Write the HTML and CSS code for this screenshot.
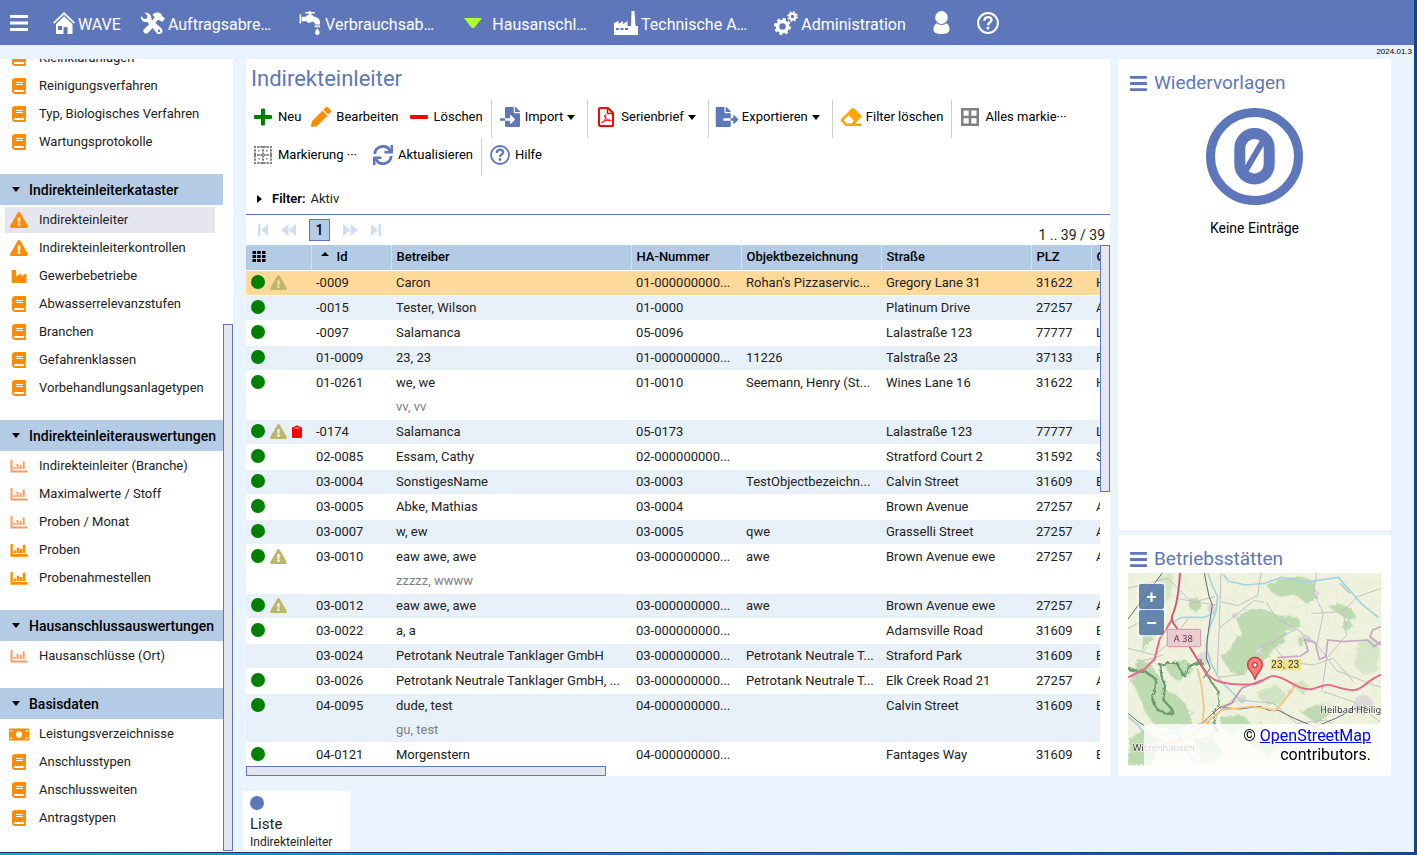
FILE: index.html
```html
<!DOCTYPE html>
<html lang="de">
<head>
<meta charset="utf-8">
<meta name="viewport" content="width=device-width, initial-scale=1">
<title>WAVE – Indirekteinleiter</title>
<link rel="stylesheet" href="styles.css">
</head>
<body>
<svg class="sprite" aria-hidden="true">
  <symbol id="i-book" viewBox="0 0 448 512"><path d="M448 360V24c0-13.300-10.700-24-24-24H96C43 0 0 43 0 96v320c0 53 43 96 96 96h328c13.300 0 24-10.700 24-24v-16c0-7.500-3.500-14.300-8.900-18.700-4.200-15.400-4.200-59.300 0-74.700 5.400-4.300 8.900-11.100 8.900-18.600zM128 134c0-3.300 2.700-6 6-6h212c3.300 0 6 2.700 6 6v20c0 3.300-2.700 6-6 6H134c-3.300 0-6-2.700-6-6v-20zm0 64c0-3.300 2.700-6 6-6h212c3.300 0 6 2.700 6 6v20c0 3.300-2.700 6-6 6H134c-3.300 0-6-2.700-6-6v-20zm253.400 250H96c-17.700 0-32-14.300-32-32 0-17.600 14.400-32 32-32h285.400c-1.900 17.100-1.900 46.900 0 64z"/></symbol>
  <symbol id="i-warn" viewBox="0 0 576 512"><path d="M569.500 440C588 472 564.800 512 527.900 512H48c-36.900 0-60-40-41.500-72L246.400 24c18.500-32 64.700-32 83.200 0l239.900 416zM288 354c-25.400 0-46 20.600-46 46s20.600 46 46 46 46-20.600 46-46-20.600-46-46-46zm-43.700-165.300l7.400 136c.4 6.300 5.700 11.300 12 11.300h48.600c6.300 0 11.600-5 12-11.300l7.400-136c.3-6.900-5.100-12.700-12-12.700h-63.400c-6.900 0-12.300 5.800-12 12.700z"/></symbol>
  <symbol id="i-factory" viewBox="0 32 512 448"><path d="M475 163.800L336 252.300V184c0-18.900-20.900-30.400-36.900-20.200L160 252.300V56c0-13.300-10.700-24-24-24H24C10.700 32 0 42.700 0 56v400c0 13.300 10.700 24 24 24h464c13.300 0 24-10.700 24-24V184c0-18.900-20.900-30.400-37-20.200z"/></symbol>
  <symbol id="i-chart" viewBox="0 0 17 13"><path d="M0 0h2v10.500h15v2H0zM3 7h2v2H3zM6 4h2v5H6zM9 5h2v4H9zM12.200 1.500h2V9h-2z"/></symbol>
  <symbol id="i-chart-bold" viewBox="0 0 17 13"><path d="M0 0h2.300v10H17v2.700H0zM3.200 6.500h2.500V9H3.200zM6.200 3.800h2.500V9H6.200zM9.200 5h2.500v4H9.200zM12.200.8h2.700V9h-2.700z"/></symbol>
  <symbol id="i-money" viewBox="0 0 20 12"><path fill-rule="evenodd" d="M1 0h18a1 1 0 0 1 1 1v10a1 1 0 0 1-1 1H1a1 1 0 0 1-1-1V1a1 1 0 0 1 1-1zM10 2.800a3 3.200 0 1 0 0 6.400 3 3.200 0 0 0 0-6.400zM1.500 1.500v2a2 2 0 0 0 2-2zM16.500 1.500a2 2 0 0 0 2 2v-2zM1.500 8.500v2h2a2 2 0 0 0-2-2zM18.500 8.500a2 2 0 0 0-2 2h2z"/></symbol>
  <symbol id="i-pencil" viewBox="0 0 512 512"><path d="M498 142l-46 46c-5 5-12 5-17 0L324 77c-5-5-5-12 0-17l46-46c19-19 49-19 68 0l60 60c19 19 19 49 0 68zM284 100L22 362 0 484c-3 16 11 31 28 28l122-22 262-262c5-5 5-12 0-17L301 100c-5-5-12-5-17 0z"/></symbol>
  <symbol id="i-import" viewBox="0 0 512 512"><path d="M16 288c-8.800 0-16 7.200-16 16v32c0 8.800 7.200 16 16 16h112v-64zm489-183L407 7c-4.500-4.500-10.600-7-17-7h-6v128h128v-6c0-6.300-2.500-12.400-7-17zm-153 31V0H152c-13.300 0-24 10.700-24 24v264h128v-65c0-14.300 17.300-21.400 27.400-11.300L379 308c6.600 6.700 6.600 17.400 0 24l-95.700 96.400c-10.100 10.100-27.400 3-27.400-11.300V352H128v136c0 13.300 10.700 24 24 24h336c13.300 0 24-10.700 24-24V160H376c-13.200 0-24-10.800-24-24z"/></symbol>
  <symbol id="i-export" viewBox="0 0 576 512"><path d="M384 122c0-6.300-2.500-12.400-7-17L279 7c-4.500-4.500-10.600-7-17-7h-6v128h128zM571 308l-95.700-96.400c-10.100-10.100-27.400-3-27.400 11.300V288h-64v64h64v65c0 14.300 17.300 21.400 27.400 11.300L571 332c6.600-6.600 6.600-17.400 0-24zm-379 28v-32c0-8.800 7.200-16 16-16h176V160H248c-13.200 0-24-10.800-24-24V0H24C10.700 0 0 10.700 0 24v464c0 13.300 10.700 24 24 24h336c13.300 0 24-10.700 24-24V352H208c-8.800 0-16-7.200-16-16z"/></symbol>
  <symbol id="i-eraser" viewBox="0 32 512 448"><path d="M498 274c18.700-18.700 18.700-49.100 0-68L338 46c-18.700-18.700-49.100-18.700-68 0L14 302c-18.700 18.700-18.700 49.100 0 68l96 96a48 48 0 0 0 34 14h356c6.600 0 12-5.400 12-12v-40c0-6.600-5.400-12-12-12H356l142-142zm-302.700-62.700l137.400 137.400L265.400 416H150.600l-80-80 124.700-124.700z"/></symbol>
  <symbol id="i-plus" viewBox="0 0 18 18"><path d="M7 1.500a1 1 0 0 1 1-1h2a1 1 0 0 1 1 1V7h6a1 1 0 0 1 1 1v2a1 1 0 0 1-1 1h-6v5.500a1 1 0 0 1-1 1H8a1 1 0 0 1-1-1V11H1a1 1 0 0 1-1-1V8a1 1 0 0 1 1-1h6z"/></symbol>
  <symbol id="i-minus" viewBox="0 0 18 18"><rect y="7" width="18" height="4" rx="1"/></symbol>
  <symbol id="i-pdf" viewBox="0 0 16 20"><path fill="none" stroke="currentColor" stroke-width="2" stroke-linejoin="round" d="M1 2a1 1 0 0 1 1-1h8l5 5v12a1 1 0 0 1-1 1H2a1 1 0 0 1-1-1z"/><path fill="none" stroke="currentColor" stroke-width="1.500" d="M9.500 1v5.500H15"/><path fill="none" stroke="currentColor" d="M3.500 15.800c1.600.6 4.300-4 4.300-7.300 0-1.400-1.200-1.200-1 .3.300 2.200 2.300 4.700 4.700 5.200 1.500.3 1.300-1.200 0-1.200-2.600 0-6.500 1.300-8 3z"/></symbol>
  <symbol id="i-grid" viewBox="0 0 18 18"><path fill-rule="evenodd" d="M0 0h18v18H0zM2.500 2.500v5.200h5.200V2.500zM10.300 2.500v5.200h5.200V2.500zM2.500 10.300v5.200h5.200v-5.200zM10.300 10.300v5.200h5.200v-5.200z"/></symbol>
  <symbol id="i-dotgrid" viewBox="0 0 18 18"><path fill="none" stroke="currentColor" stroke-width="2" stroke-dasharray="2 1.200" d="M0 1h18M0 9h18M0 17h18M1 0v18M9 0v18M17 0v18"/><path fill="none" stroke="currentColor" stroke-width="1.200" stroke-dasharray="1.500 2.500" d="M0 5h18M0 13h18M5 0v18M13 0v18"/></symbol>
  <symbol id="i-refresh" viewBox="0 0 20 20"><path fill="none" stroke="currentColor" stroke-width="2.800" d="M1.800 9A8.100 8.100 0 0 1 17 5.600M18.200 11A8.100 8.100 0 0 1 3 14.400"/><path d="M17.500 0H20v8.500h-8.500V6H15l2.500-1zM2.500 20H0v-8.500h8.500V14H5l-2.500 1z"/></symbol>
  <symbol id="i-help" viewBox="0 0 20 20"><circle cx="10" cy="10" r="9" fill="none" stroke="currentColor" stroke-width="1.800"/><path fill="none" stroke="currentColor" stroke-width="2.200" d="M6.800 8c0-4.300 6.400-4.300 6.400-.8 0 2.300-3.200 2.200-3.200 4.800"/><circle cx="10" cy="14.500" r="1.400"/></symbol>
  <symbol id="i-menu" viewBox="0 0 18 16"><path d="M0 0h18v3H0zM0 6.500h18v3H0zM0 13h18v3H0z"/></symbol>
  <symbol id="i-home" viewBox="0 0 22 22"><path d="M11 0l11 10.500-1.300 1.300L11 2.600 1.300 11.800 0 10.500z"/><path fill-rule="evenodd" d="M11 4.200l8.500 8V22h-5v-7h-4v7H3v-9.800zM5 14v4h4v-4z"/></symbol>
  <symbol id="i-tools" viewBox="0 0 24 22"><path d="M3.500.5l3 3L6 6.500l-3 .6-3-3C-.6 8 2.500 10.800 6.300 10l8.900 10.500c1.400 1.800 3.700 2 5.200.8s1.500-3.500 0-5L10.500 7.500C11 3.500 7.500-.3 3.500.5zM18 17.500a1.200 1.200 0 1 1 0 2.400 1.200 1.200 0 0 1 0-2.400z"/><path d="M11.500 2.800C14-.5 18 0 20.500 2l.5 2 3 2.500-3 3.500-2.200-1.700-2-.3-2.600 3-3-2.800 2.700-2.700zM9 11.500l3.700 3.300-5.700 6.200c-2.600 1.800-5.700-.8-4.300-3.500z"/></symbol>
  <symbol id="i-tap" viewBox="0 0 20 23"><path d="M0 3h1.500v9H0zM2 5.500h4c.8-1 1.600-1.500 2.700-1.700V2.500H5.500V1H9V0h2v1h3.500v1.500h-3.200v1.300c1.500.2 2.500 1 3.200 2C17.500 6 19.700 8 19.500 11v2h-5c.2-2-.7-2.700-2.500-2.700-1.700 1.500-4 1.200-5.500-.5H2zM14.500 14h5v1.500h-5zM17 16.500c1.300 1.800 2.300 3 2.300 4.200 0 3-4.600 3-4.600 0 0-1.200 1-2.400 2.300-4.200z"/></symbol>
  <symbol id="i-plant" viewBox="0 0 24 24"><path fill-rule="evenodd" d="M17.500 0h3l1 15H24v9H0V12l4.500-2v3L9 10v3l4.500-3v5H17zM2 17v2h3v-2zM6.500 17v2h3v-2zM11 17v2h3v-2z"/></symbol>
  <symbol id="i-gears" viewBox="0 0 24 24"><g fill="none" stroke="currentColor"><circle cx="8.500" cy="15.500" r="5" stroke-width="3.600"/><circle cx="8.500" cy="15.500" r="7.200" stroke-width="2.600" stroke-dasharray="3.050 2.600"/><circle cx="18.500" cy="5.500" r="2.800" stroke-width="2.200"/><circle cx="18.500" cy="5.500" r="4.400" stroke-width="1.900" stroke-dasharray="1.850 1.600"/></g></symbol>
  <symbol id="i-user" viewBox="0 0 16 23"><ellipse cx="8" cy="6.500" rx="6.300" ry="6.500"/><path d="M3 12.300c3 2.200 7 2.200 10 0 2 1.200 3 3.700 3 6.200 0 3-3 4.500-8 4.500s-8-1.500-8-4.500c0-2.500 1-5 3-6.200z"/></symbol>
  <symbol id="i-clip" viewBox="0 0 10 13"><path d="M1 2h1.500V1h1.300a1.300 1.300 0 0 1 2.400 0h1.300v1H9a1 1 0 0 1 1 1v9a1 1 0 0 1-1 1H1a1 1 0 0 1-1-1V3a1 1 0 0 1 1-1z"/><path stroke="#fff" stroke-width=".8" fill="none" d="M2.500 3h5"/></symbol>
  <symbol id="i-cells" viewBox="0 0 13 11"><path d="M0 0h3.500v3H0zM4.700 0h3.500v3H4.700zM9.500 0H13v3H9.500zM0 4h3.500v3H0zM4.700 4h3.500v3H4.700zM9.500 4H13v3H9.500zM0 8h3.500v3H0zM4.700 8h3.500v3H4.700zM9.500 8H13v3H9.500z"/></symbol>
  <symbol id="i-first" viewBox="0 0 10 12"><path d="M0 0h2.500v12H0zM10 0v12L3 6z"/></symbol>
  <symbol id="i-prev" viewBox="0 0 15 12"><path d="M7.500 0v12L0 6zM15 0v12L7.500 6z"/></symbol>
</svg>

<div class="app">
  <header class="topbar">
    <button class="nav-btn burger" aria-label="Menü"><svg class="ic-menu"><use href="#i-menu"/></svg></button>
    <nav class="nav">
      <button class="nav-btn"><svg class="ic22"><use href="#i-home"/></svg><span>WAVE</span></button>
      <button class="nav-btn"><svg class="ic24"><use href="#i-tools"/></svg><span>Auftragsabre…</span></button>
      <button class="nav-btn"><svg class="ic24"><use href="#i-tap"/></svg><span>Verbrauchsab…</span></button>
      <button class="nav-btn current"><svg class="ic-tri" viewBox="0 0 18 10"><path d="M0 0h18L11 9q-2 2-4 0z"/></svg><span>Hausanschl…</span></button>
      <button class="nav-btn"><svg class="ic24"><use href="#i-plant"/></svg><span>Technische A…</span></button>
      <button class="nav-btn"><svg class="ic24"><use href="#i-gears"/></svg><span>Administration</span></button>
      <button class="nav-btn user" aria-label="Benutzer"><svg class="ic-user"><use href="#i-user"/></svg></button>
      <button class="nav-btn" aria-label="Hilfe"><svg class="ic22"><use href="#i-help"/></svg></button>
    </nav>
  </header>
  <div class="version">2024.01.3</div>

  <div class="workspace">
    <aside class="sidebar">
      <div class="menu">
        <ul class="menu-list">
          <li><a href="#"><svg><use href="#i-book"/></svg>Kleinkläranlagen</a></li>
          <li><a href="#"><svg><use href="#i-book"/></svg>Reinigungsverfahren</a></li>
          <li><a href="#"><svg><use href="#i-book"/></svg>Typ, Biologisches Verfahren</a></li>
          <li><a href="#"><svg><use href="#i-book"/></svg>Wartungsprotokolle</a></li>
        </ul>
        <button class="menu-head"><i class="caret"></i>Indirekteinleiterkataster</button>
        <ul class="menu-list">
          <li><a href="#" class="selected"><svg><use href="#i-warn"/></svg>Indirekteinleiter</a></li>
          <li><a href="#"><svg><use href="#i-warn"/></svg>Indirekteinleiterkontrollen</a></li>
          <li><a href="#"><svg class="low"><use href="#i-factory"/></svg>Gewerbebetriebe</a></li>
          <li><a href="#"><svg><use href="#i-book"/></svg>Abwasserrelevanzstufen</a></li>
          <li><a href="#"><svg><use href="#i-book"/></svg>Branchen</a></li>
          <li><a href="#"><svg><use href="#i-book"/></svg>Gefahrenklassen</a></li>
          <li><a href="#"><svg><use href="#i-book"/></svg>Vorbehandlungsanlagetypen</a></li>
        </ul>
        <button class="menu-head"><i class="caret"></i>Indirekteinleiterauswertungen</button>
        <ul class="menu-list">
          <li><a href="#"><svg class="low pale"><use href="#i-chart"/></svg>Indirekteinleiter (Branche)</a></li>
          <li><a href="#"><svg class="low pale"><use href="#i-chart"/></svg>Maximalwerte / Stoff</a></li>
          <li><a href="#"><svg class="low pale"><use href="#i-chart"/></svg>Proben / Monat</a></li>
          <li><a href="#"><svg class="low"><use href="#i-chart-bold"/></svg>Proben</a></li>
          <li><a href="#"><svg class="low"><use href="#i-chart-bold"/></svg>Probenahmestellen</a></li>
        </ul>
        <button class="menu-head"><i class="caret"></i>Hausanschlussauswertungen</button>
        <ul class="menu-list">
          <li><a href="#"><svg class="low pale"><use href="#i-chart"/></svg>Hausanschlüsse (Ort)</a></li>
        </ul>
        <button class="menu-head"><i class="caret"></i>Basisdaten</button>
        <ul class="menu-list">
          <li><a href="#"><svg class="low"><use href="#i-money"/></svg>Leistungsverzeichnisse</a></li>
          <li><a href="#"><svg><use href="#i-book"/></svg>Anschlusstypen</a></li>
          <li><a href="#"><svg><use href="#i-book"/></svg>Anschlussweiten</a></li>
          <li><a href="#"><svg><use href="#i-book"/></svg>Antragstypen</a></li>
        </ul>
      </div>
      <div class="track track-menu"><div class="thumb"></div></div>
    </aside>

    <div class="content">
      <div class="columns">
        <main class="panel list-panel">
          <h1>Indirekteinleiter</h1>
          <div class="toolbar">
            <button><svg class="green"><use href="#i-plus"/></svg><span>Neu</span></button>
            <button><svg class="dark-orange big"><use href="#i-pencil"/></svg><span>Bearbeiten</span></button>
            <button><svg class="red"><use href="#i-minus"/></svg><span>Löschen</span></button>
            <button class="sep drop"><svg class="blue big"><use href="#i-import"/></svg><span>Import</span><i class="caret"></i></button>
            <button class="sep drop"><svg class="red big"><use href="#i-pdf"/></svg><span>Serienbrief</span><i class="caret"></i></button>
            <button class="sep drop"><svg class="blue big"><use href="#i-export"/></svg><span>Exportieren</span><i class="caret"></i></button>
            <button class="sep"><svg class="orange"><use href="#i-eraser"/></svg><span>Filter löschen</span></button>
            <button class="sep"><svg class="gray"><use href="#i-grid"/></svg><span class="cut">Alles markie···</span></button>
            <button><svg class="gray"><use href="#i-dotgrid"/></svg><span class="cut">Markierung ···</span></button>
            <button><svg class="blue big"><use href="#i-refresh"/></svg><span>Aktualisieren</span></button>
            <button class="sep"><svg class="blue big"><use href="#i-help"/></svg><span>Hilfe</span></button>
          </div>
          <button class="filter"><i class="caret-right"></i><b>Filter:</b> Aktiv</button>
          <div class="pager">
            <button aria-label="Erste Seite"><svg><use href="#i-first"/></svg></button>
            <button aria-label="Zurück"><svg><use href="#i-prev"/></svg></button>
            <button class="page">1</button>
            <button aria-label="Weiter" class="flip"><svg><use href="#i-prev"/></svg></button>
            <button aria-label="Letzte Seite" class="flip"><svg><use href="#i-first"/></svg></button>
            <span class="count">1 .. 39 / 39</span>
          </div>
          <div class="grid-area">
            <div class="viewport">
              <table>
                <colgroup><col class="c-state"><col class="c-id"><col class="c-op"><col class="c-ha"><col class="c-obj"><col class="c-str"><col class="c-plz"><col></colgroup>
                <thead>
                  <tr><th aria-label="Status"><svg class="cells"><use href="#i-cells"/></svg></th><th><i class="caret-up"></i>Id</th><th>Betreiber</th><th>HA-Nummer</th><th>Objektbezeichnung</th><th>Straße</th><th>PLZ</th><th>Ort</th></tr>
                </thead>
                <tbody>
                  <tr class="active"><td><i class="dot"></i><svg class="hint"><use href="#i-warn"/></svg></td><td>-0009</td><td>Caron</td><td>01-000000000...</td><td>Rohan's Pizzaservic...</td><td>Gregory Lane 31</td><td>31622</td><td>H</td></tr>
                  <tr><td><i class="dot"></i></td><td>-0015</td><td>Tester, Wilson</td><td>01-0000</td><td></td><td>Platinum Drive</td><td>27257</td><td>A</td></tr>
                  <tr><td><i class="dot"></i></td><td>-0097</td><td>Salamanca</td><td>05-0096</td><td></td><td>Lalastraße 123</td><td>77777</td><td>L</td></tr>
                  <tr><td><i class="dot"></i></td><td>01-0009</td><td>23, 23</td><td>01-000000000...</td><td>11226</td><td>Talstraße 23</td><td>37133</td><td>F</td></tr>
                  <tr><td><i class="dot"></i></td><td>01-0261</td><td>we, we<small>vv, vv</small></td><td>01-0010</td><td>Seemann, Henry (St...</td><td>Wines Lane 16</td><td>31622</td><td>H</td></tr>
                  <tr><td><i class="dot"></i><svg class="hint"><use href="#i-warn"/></svg><svg class="clip"><use href="#i-clip"/></svg></td><td>-0174</td><td>Salamanca</td><td>05-0173</td><td></td><td>Lalastraße 123</td><td>77777</td><td>L</td></tr>
                  <tr><td><i class="dot"></i></td><td>02-0085</td><td>Essam, Cathy</td><td>02-000000000...</td><td></td><td>Stratford Court 2</td><td>31592</td><td>S</td></tr>
                  <tr><td><i class="dot"></i></td><td>03-0004</td><td>SonstigesName</td><td>03-0003</td><td>TestObjectbezeichn...</td><td>Calvin Street</td><td>31609</td><td>E</td></tr>
                  <tr><td><i class="dot"></i></td><td>03-0005</td><td>Abke, Mathias</td><td>03-0004</td><td></td><td>Brown Avenue</td><td>27257</td><td>A</td></tr>
                  <tr><td><i class="dot"></i></td><td>03-0007</td><td>w, ew</td><td>03-0005</td><td>qwe</td><td>Grasselli Street</td><td>27257</td><td>A</td></tr>
                  <tr><td><i class="dot"></i><svg class="hint"><use href="#i-warn"/></svg></td><td>03-0010</td><td>eaw awe, awe<small>zzzzz, wwww</small></td><td>03-000000000...</td><td>awe</td><td>Brown Avenue ewe</td><td>27257</td><td>A</td></tr>
                  <tr><td><i class="dot"></i><svg class="hint"><use href="#i-warn"/></svg></td><td>03-0012</td><td>eaw awe, awe</td><td>03-000000000...</td><td>awe</td><td>Brown Avenue ewe</td><td>27257</td><td>A</td></tr>
                  <tr><td><i class="dot"></i></td><td>03-0022</td><td>a, a</td><td>03-000000000...</td><td></td><td>Adamsville Road</td><td>31609</td><td>E</td></tr>
                  <tr><td></td><td>03-0024</td><td>Petrotank Neutrale Tanklager GmbH</td><td>03-000000000...</td><td>Petrotank Neutrale T...</td><td>Straford Park</td><td>31609</td><td>E</td></tr>
                  <tr><td><i class="dot"></i></td><td>03-0026</td><td>Petrotank Neutrale Tanklager GmbH, ...</td><td>03-000000000...</td><td>Petrotank Neutrale T...</td><td>Elk Creek Road 21</td><td>27257</td><td>A</td></tr>
                  <tr><td><i class="dot"></i></td><td>04-0095</td><td>dude, test<small>gu, test</small></td><td>04-000000000...</td><td></td><td>Calvin Street</td><td>31609</td><td>E</td></tr>
                  <tr><td><i class="dot"></i></td><td>04-0121</td><td>Morgenstern</td><td>04-000000000...</td><td></td><td>Fantages Way</td><td>31609</td><td>E</td></tr>
                </tbody>
              </table>
            </div>
            <div class="track track-v"><div class="thumb"></div></div>
            <div class="track track-h"><div class="thumb"></div></div>
          </div>
        </main>

        <div class="side">
          <section class="panel card grow">
            <h2><svg><use href="#i-menu"/></svg>Wiedervorlagen</h2>
            <svg class="zero" viewBox="0 0 97 97" role="img" aria-label="0"><g fill="none" stroke="currentColor"><circle cx="48.500" cy="48.500" r="44" stroke-width="9"/><rect x="33.800" y="25.500" width="29.400" height="45.500" rx="14.700" stroke-width="11"/><path stroke-width="6" d="M40 62l17-29"/></g></svg>
            <p>Keine Einträge</p>
          </section>
          <section class="panel card">
            <h2><svg><use href="#i-menu"/></svg>Betriebsstätten</h2>
            <div class="map">
              <svg class="map-canvas" viewBox="54 144 759 579" preserveAspectRatio="xMidYMid slice">
                <defs>
                  <filter id="woods" x="0" y="0" width="1" height="1"><feTurbulence type="fractalNoise" baseFrequency=".055" numOctaves="4" seed="8"/><feColorMatrix values="0 0 0 0 .79  0 0 0 0 .89  0 0 0 0 .7  9 0 0 0 -4.900"/></filter>
                  <filter id="rough" x="-.1" y="-.1" width="1.200" height="1.200"><feTurbulence type="fractalNoise" baseFrequency=".09" numOctaves="3" seed="3"/><feDisplacementMap in="SourceGraphic" scale="14"/></filter>
                </defs>
                <path fill="#f0f2de" d="M54 144h759v579H54z"/>
                <rect x="54" y="144" width="759" height="579" filter="url(#woods)"/>
                <g fill="#bddab1" filter="url(#rough)">
                  <path d="M378 280l40-28 45 0 45 20 55 5 12 25-45 15-8 35-32 20-25 35-45 10-20 32-35-5-20-30-13-22 30-20 10-30 25-15z"/>
                  <path d="M470 180l45-20 60-5 40 15 8 50-35 15-30-25-50 5-22-12z"/>
                  <path d="M85 400l40 20 25 40 15 35 35 15 30 30 18 60-50 15-60-10-30-40-20-50-25-50z"/>
                  <path d="M100 330l30-20 25 10-30 25-30 35z"/>
                  <path d="M150 150l40-5-5 60-30 50-40 25-15-30 30-40z" opacity=".5"/>
                  <path d="M240 220l20-5 15 30-20 15-20-15z"/>
                  <path d="M560 340l20-10 10 15-20 20z"/>
                  <path d="M655 245l30-10 40 15 15 30-25 5-30-20z"/>
                  <path d="M700 290l20-5 10 20-30 10z"/>
                  <path d="M750 350l40-10 20 30-10 70-40 10-30-30 10-40z" opacity=".5"/>
                  <path d="M440 500l60-20 30 30-20 30-50-5z" opacity=".6"/>
                  <path d="M160 415l70-10 20 30-45 35-25-20z"/>
                  <path d="M330 575l70-5 25 30-60 25-30-15z"/>
                  <path d="M60 640l50-30 40 50-30 60H54z"/>
                  <path d="M250 640l60-10 30 60-60 30z"/>
                  <path d="M570 560l60-25 40 25-50 35z"/>
                  <path d="M400 640l60-15 50 40-40 30z"/>
                  <path d="M545 480l30-15 25 20-20 25z" opacity=".6"/>
                </g>
                <g fill="#dcd9d6"><circle cx="305" cy="250" r="13"/><circle cx="590" cy="343" r="13"/><circle cx="447" cy="378" r="10"/><circle cx="620" cy="205" r="8"/><circle cx="375" cy="272" r="9"/><circle cx="397" cy="522" r="13"/><circle cx="283" cy="400" r="20"/><circle cx="760" cy="540" r="30"/><circle cx="540" cy="500" r="8"/><circle cx="185" cy="665" r="16"/></g>
                <g fill="none" stroke="#c3bfc4" stroke-width="3" stroke-linejoin="round">
                  <path d="M333 144l-6 180-6 130M333 230l50 12 60-30 10-68M327 310l50-40 55-43 30 5M54 190l120-30 70 70 80 10M200 220l55 10 60-15M470 232l30 50 60 30 60 45 60 80 130 50M620 144l-10 60 30 60-20 100M560 312l-50 25-80 60-25 50-80 10M813 190l-70 25-45 45-90 5M700 260l10 70-60 70-15 100M54 370l80 20 60-50 40-60M60 470l30-60 70-20M330 545l60-20 100 10 70 60 90-10 60 40M250 560l-50 60 50 90M430 380l50-30 50 60 80 10 60-20 60 70M370 520l-50 50-20 90M450 590l20 50 90 50M640 500l90 30 80 60M54 310l40-20 30-60M150 630l70-10 60-30"/>
                </g>
                <g fill="none" stroke="#a9d3df" stroke-width="5" stroke-linejoin="round">
                  <path d="M293 144l15 40 15 30-5 45-18 45-12 60 15 50 25 50 40 40 30 30M315 262l-30 15-70 0-45 25M340 148l15 20 50 12 60-5 50-18 70 15 100-15 35 40 35 40 50 40M54 575l30 25 20 30 50 20M690 175l30 30"/>
                </g>
                <path fill="none" stroke="#c6a7c5" stroke-width="5" d="M813 305l-25 10-8 20 33 25M813 350l-20 15-20-20-75 5-45-5-5 50-20 8-12-50-32-10 10 35-22 15-70 5"/>
                <g fill="none" stroke="#6a9b6c" stroke-width="7" stroke-linejoin="round" filter="url(#rough)">
                  <path d="M54 432l55 10 28 20 0 30-12 25 15 35 30 15 22-3-10-15-22-25 5-40-10-30-5-35 50-5 22 40 15-30 35-15"/>
                  <path stroke-width="5" d="M270 400l20 50 35 50 2 40-15 20 0 35 10 30"/>
                </g>
                <path fill="none" stroke="#666b6e" stroke-width="3" stroke-linejoin="round" d="M157 144L54 282M283 144l14 70 10 25-15 100-3 60 12 30-20 30M54 565l30 25 25 15M275 597l20-20 35-30 60 5 60-8 25 12 30 0 50 25 60 25 60-25 60-30 34-5"/>
                <path fill="none" stroke="#f8c27b" stroke-width="5" stroke-linejoin="round" d="M262 430l12 50 8 70-5 45M285 595l50-40 90-10 45 5 25 8 25-28 40-55M300 590l-60 45-70 20-60-30"/>
                <path fill="none" stroke="#b890ae" stroke-width="5" d="M330 550l35-15 30-45 60-25"/>
                <g fill="none" stroke="#e66d89" stroke-width="6" stroke-linejoin="round">
                  <path d="M54 457l50-25 30-30 15-60 20-30 20-35"/>
                  <path d="M210 144c-3 45-6 80-18 115-10 20-8 22-2 35l45 65 40 65q18 38 60 48t95 5c25-3 38-22 60-24 25-2 60 30 85 36 50 15 50-20 100-5 55 17 65 15 90-5s35-25 48-30"/>
                  <path stroke="#9b4553" stroke-width="2" d="M210 144c-3 45-6 80-18 115-10 20-8 22-2 35l45 65 40 65"/>
                </g>
                <rect x="172" y="313" width="100" height="52" rx="4" fill="#eaccd2" stroke="#d197a8" stroke-width="3"/>
                <text class="map-road" x="191" y="350">A 38</text>
                <text class="map-town" x="630" y="564">Heilbad Heiligenstadt</text>
                <text class="map-town" x="68" y="679">Witzenhausen</text>
                <path fill="#f0e58c" d="M482 402h92v34h-92z"/>
                <text class="map-pin" x="484" y="428">23, 23</text>
                <path fill="#f97c7c" stroke="#ce3c42" stroke-width="4" d="M435 464c-3-20-22-28-22-45a22 22 0 0 1 44 0c0 17-19 25-22 45z"/>
                <circle cx="435" cy="420" r="7" fill="#fff" stroke="#ce3c42" stroke-width="4"/>
              </svg>
              <div class="map-zoom"><button aria-label="Vergrößern">+</button><button aria-label="Verkleinern">−</button></div>
              <p class="credit">© <a href="#">OpenStreetMap</a> contributors.</p>
            </div>
          </section>
        </div>
      </div>
      <button class="tab"><i class="dot"></i><strong>Liste</strong><span>Indirekteinleiter</span></button>
    </div>
  </div>
</div>
</body>
</html>
```
FILE: styles.css
```css
* { box-sizing: border-box; }

body {
  margin: 0;
  height: 100vh;
  padding: 0 2px 2px 0;
  overflow: hidden;
  background: linear-gradient(90deg, #00a8ee, #0047bb);
  color: #222;
  font: 13px/24px Roboto, "Liberation Sans", sans-serif;
}

button {
  border: 0;
  padding: 0;
  background: none;
  color: inherit;
  font: inherit;
  text-align: left;
}

svg { display: block; flex: none; fill: currentColor; }
.sprite { position: absolute; width: 0; height: 0; }

.app {
  display: flex;
  flex-direction: column;
  height: 100%;
  border: solid #1c3f66;
  border-width: 0 1px 1px 0;
  background: #eaf4ff;
}

/* Top bar */
.topbar {
  display: flex;
  flex: none;
  align-items: center;
  height: 45px;
  padding-left: 10px;
  gap: 25px;
  background: #5e77ba;
  color: #fff;
  font-size: 16px;
}
.nav { display: flex; gap: 27px; }
.nav-btn { display: flex; align-items: center; gap: 3px; white-space: nowrap; }
.nav-btn span { padding-top: 4px; }
.nav-btn:first-child { margin-right: -7px; }
.burger:first-child { margin-right: 0; }
.ic-menu { width: 18px; height: 18px; }
.ic22 { width: 22px; height: 22px; }
.ic24 { width: 24px; height: 24px; }
.ic-user { width: 17px; height: 23px; }
.ic-tri { width: 18px; height: 10px; margin: 0 7px 0 3px; color: #adff2f; }

.version {
  flex: none;
  height: 14px;
  padding-right: 2px;
  color: #000;
  font: 8px/14px "Liberation Sans", Arial, sans-serif;
  text-align: right;
}

.workspace { display: flex; flex: 1; min-height: 0; }

/* Sidebar */
.sidebar { display: flex; flex: none; width: 233px; margin-right: 10px; margin-bottom: 1px; background: #fff; }
.menu {
  display: flex;
  flex: 1;
  flex-direction: column;
  justify-content: flex-end;
  padding-bottom: 19px;
  overflow: hidden;
}
.menu-list { flex: none; margin: 0 0 18px; padding: 0; list-style: none; }
.menu-list:last-child { margin-bottom: 0; }
.menu-list li { height: 28px; padding: 1px 8px 1px 5px; }
.menu-list a {
  display: flex;
  align-items: center;
  gap: 10px;
  height: 26px;
  padding-left: 4px;
  color: #222;
  text-decoration: none;
}
.menu-list svg { width: 20px; height: 16px; color: #ff8c00; }
.menu-list svg.low { height: 13px; }
.menu-list svg.pale { color: #ff9a60; }
.menu-list .selected { background: #e6e6f0; }
.menu-head {
  display: flex;
  flex: none;
  align-items: center;
  gap: 9px;
  height: 31px;
  margin-bottom: 1px;
  padding-left: 12px;
  background: #b3cbe5;
  color: #000;
  font-size: 14px;
  font-weight: 500;
  white-space: nowrap;
}

.caret, .caret-up, .caret-right { display: inline-block; flex: none; border: 4px solid transparent; }
.caret { border-top: 5px solid #000; border-bottom: 0; }
.caret-up { margin: 0 8px 5px 4px; border-bottom: 4px solid #000; border-top: 0; }
.caret-right { border-left: 5px solid #000; border-right: 0; }

.track { display: flex; }
.thumb { border: 1px solid #5e77ba; background: #e6e6f0; }
.track-menu { flex: none; width: 10px; align-items: flex-end; }
.track-menu .thumb { width: 100%; height: 66.600%; }

/* Content */
.content { display: flex; flex: 1; flex-direction: column; min-width: 0; padding-right: 23px; }
.columns { display: flex; flex: 1; gap: 8px; min-height: 0; padding-left: 3px; }
.panel { background: #fff; }
.list-panel { display: flex; flex: 1; flex-direction: column; min-width: 0; }
h1, h2 { margin: 0; color: #5e77ba; font-weight: 400; }
h1 { padding: 4px 5px 5px; font-size: 22px; line-height: 32px; }

.toolbar { display: flex; flex-wrap: wrap; padding-left: 5px; color: #000; }
.toolbar button { display: flex; align-items: center; height: 38px; padding: 0 8px 4px 0; white-space: nowrap; }
.toolbar svg { width: 24px; height: 18px; margin-right: 3px; }
.toolbar svg.big { height: 20px; }
.toolbar button.sep { padding-left: 6px; border-left: 1px solid #d0d0d0; }
.toolbar button.drop { padding-right: 12px; }
.toolbar .caret { margin-left: 4px; }
.cut { width: 85px; }
.green { color: green; }
.red { color: red; }
.blue { color: #5e77ba; }
.gray { color: gray; }
.orange { color: orange; }
.dark-orange { color: #ff8c00; }

.filter {
  display: flex;
  align-items: center;
  height: 39px;
  padding: 8px 11px 0;
  border-bottom: 1px solid #5e77ba;
}
.filter b { margin: 0 5px 0 10px; color: #000; font-weight: 600; }

.pager { display: flex; align-items: center; height: 30px; padding: 0 5px 0 12px; gap: 13px; }
.pager svg { width: 15px; height: 12px; color: #cfdef0; }
.pager button:first-child svg, .pager .flip:nth-child(5) svg { width: 10px; }
.pager .flip { transform: scaleX(-1); }
.pager .page {
  width: 21px;
  height: 22px;
  border: 1px solid #5e77ba;
  background: #b3cbe5;
  color: #000;
  font-size: 14px;
  font-weight: 500;
  line-height: 20px;
  text-align: center;
}
.count { margin-left: auto; padding-top: 10px; font-size: 14px; }

.grid-area {
  display: grid;
  flex: 1;
  grid-template: minmax(0, 1fr) 10px / minmax(0, 1fr) 10px;
  min-height: 0;
}
.viewport { overflow: hidden; }
.track-v .thumb { width: 100%; height: 47.500%; }
.track-h .thumb { width: 42.200%; }

table { width: 1200px; border-collapse: collapse; table-layout: fixed; }
.c-state { width: 65px; }
.c-id { width: 80px; }
.c-op { width: 240px; }
.c-ha { width: 110px; }
.c-obj { width: 140px; }
.c-str { width: 150px; }
.c-plz { width: 60px; }
th, td { height: 25px; padding: 0 5px; border-bottom: 1px solid #fff; text-align: left; vertical-align: top; white-space: nowrap; }
th { border-right: 1px solid #d5e0ee; background: #b3cbe5; color: #000; font-weight: 500; }
tbody tr:nth-child(even) { background: #e8f1f9; }
tbody tr.active { background: #ffd999; }
td small { display: block; color: #808080; font-size: 13px; }
.cells { width: 14px; height: 11px; margin: 6px 0 0 1px; }
.dot { display: inline-block; width: 14px; height: 14px; border-radius: 50%; background: green; }
td .dot { margin: 4px 5px 0 0; vertical-align: top; }
.hint { display: inline-block; width: 17px; height: 15px; margin: 4px 5px 0 0; color: #bdb76b; vertical-align: top; }
.clip { display: inline-block; width: 10px; height: 13px; margin-top: 5px; color: red; vertical-align: top; }

/* Right side */
.side { display: flex; flex: none; flex-direction: column; gap: 5px; width: 273px; }
.card { padding: 10px; }
.grow { flex: 1; }
h2 { display: flex; align-items: center; gap: 7px; padding-left: 2px; font-size: 19px; line-height: 28px; }
h2 svg { width: 17px; height: 15px; }
.zero { width: 97px; height: 97px; margin: 11px auto; color: #5e77ba; }
.card p { margin: 0; color: #000; font-size: 14px; text-align: center; }

.map { position: relative; height: 193px; overflow: hidden; }
.map-canvas { width: 100%; height: 100%; }
.map-road, .map-town, .map-pin { font: 28px "Noto Sans", sans-serif; }
.map-road { fill: #702c49; }
.map-town { fill: #333; stroke: #fff; stroke-width: 3px; paint-order: stroke; }
.map-pin { fill: #333; font: 30px "Liberation Sans", sans-serif; }
.map-zoom { position: absolute; top: 9px; left: 9px; display: grid; gap: 1px; padding: 2px; border-radius: 4px; background: rgba(255, 255, 255, .4); }
.map-zoom button {
  width: 25px;
  height: 25px;
  border-radius: 2px;
  background: rgba(65, 105, 155, .8);
  color: #fff;
  font: bold 18px/24px "Liberation Sans", Arial, sans-serif;
  text-align: center;
}
.card .credit {
  position: absolute;
  right: 0;
  bottom: 0;
  left: 16px;
  padding: 2px 10px 2px 90px;
  background: rgba(255, 255, 255, .8);
  font-size: 16px;
  line-height: 19px;
  text-align: right;
}
.credit a { color: #00e; }

/* Open views */
.tab {
  display: flex;
  flex: none;
  flex-direction: column;
  align-self: flex-start;
  width: 107px;
  margin: 15px 0 2px;
  padding: 5px 7px 0;
  background: #fff;
}
.tab .dot { background: #5e77ba; }
.tab strong { padding-top: 3px; color: #222; font-size: 15px; font-weight: 400; line-height: 22px; }
.tab span { font-size: 12px; line-height: 15px; }
```
